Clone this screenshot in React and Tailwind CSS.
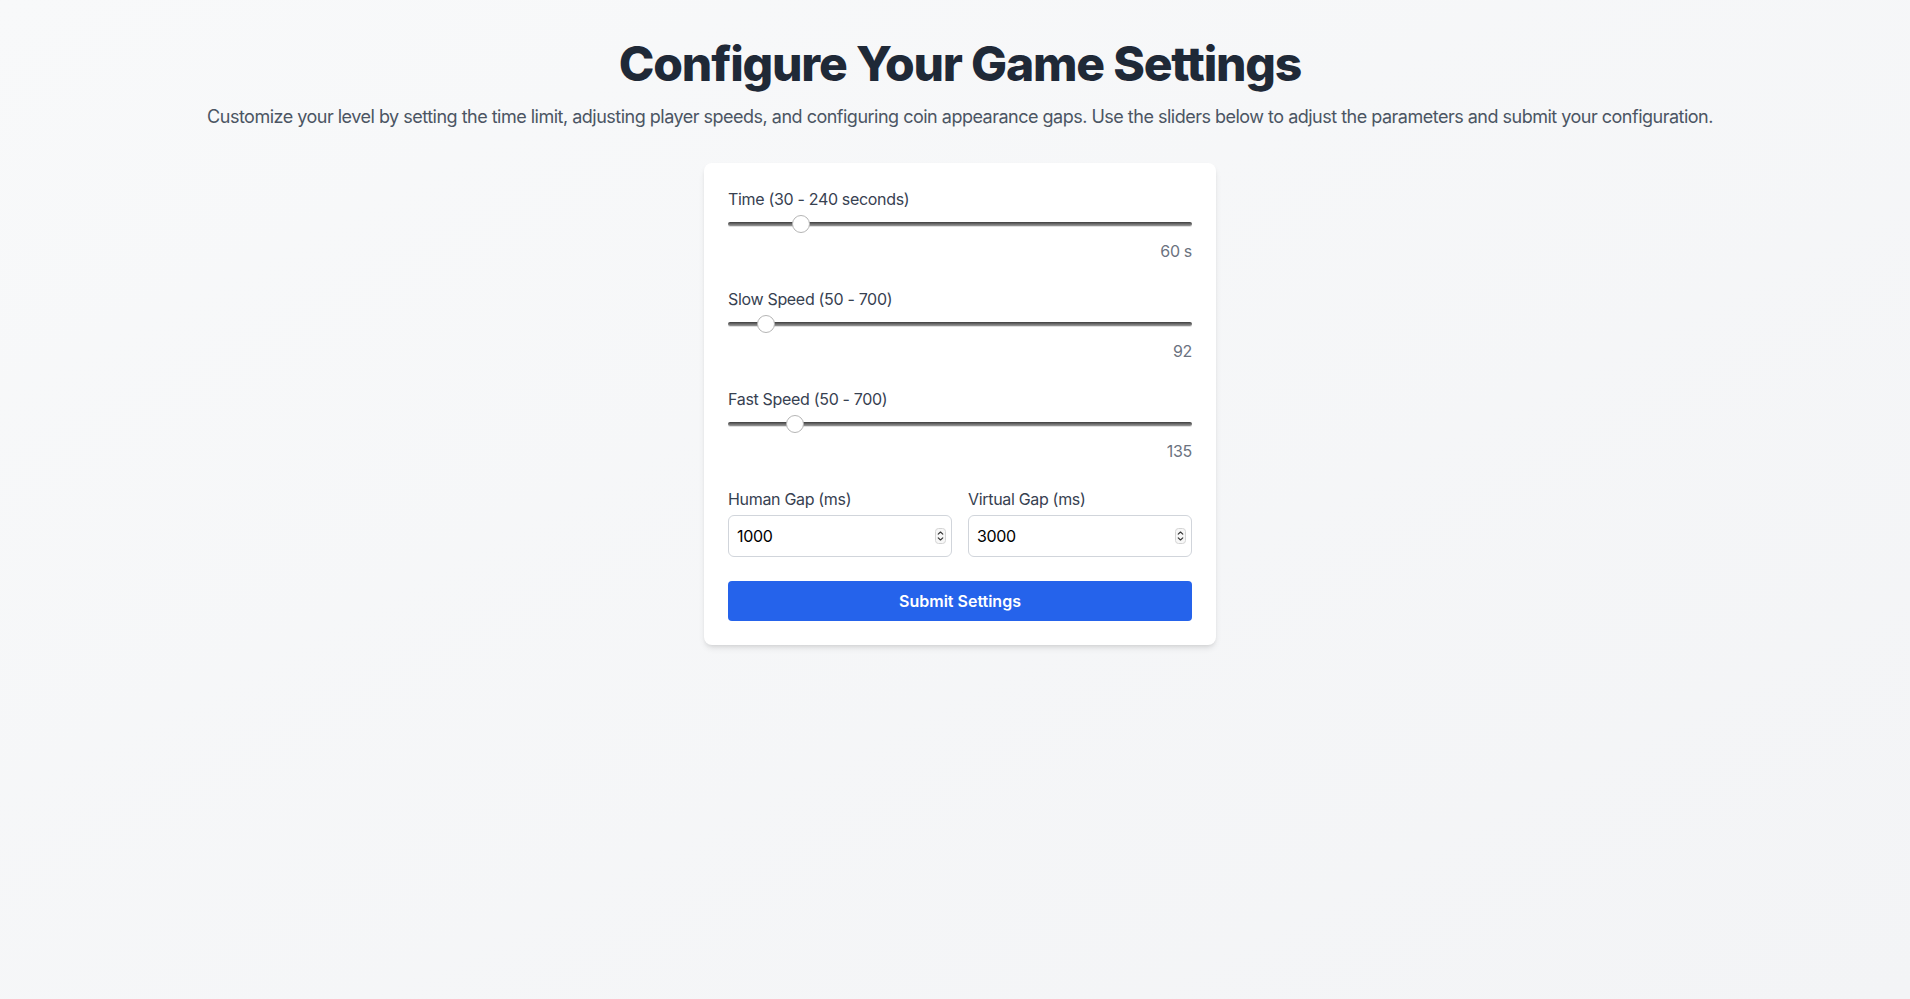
import React, { useState } from "react";

function Slider({ label, min, max, value, suffix }) {
  const pct = (value - min) / (max - min);
  return (
    <div>
      <div className="text-base leading-6 tracking-[-0.02em] text-[#374151]">{label}</div>
      <div className="relative mt-1 h-4">
        <div className="absolute left-0 right-0 top-[7px] h-[4px] rounded-full bg-linear-to-b from-[#3f3f3f] to-[#9b9b9b] shadow-[0_1px_0_rgba(0,0,0,0.12)]" />
        <div
          className="absolute top-0 h-[18px] w-[18px] rounded-full border border-[#b5b5b5] bg-white"
          style={{ left: `calc((100% - 18px) * ${pct})` }}
        />
      </div>
      <div className="mt-2 text-right text-base leading-6 tracking-[-0.02em] text-[#6b7280]">
        {value}
        {suffix}
      </div>
    </div>
  );
}

function Spinner() {
  return (
    <svg width="11" height="16" viewBox="0 0 11 16" className="shrink-0">
      <rect x="0.5" y="0.5" width="10" height="15" rx="3" fill="#f7f7f7" stroke="#d4d4d4" />
      <path d="M3.2 6.2 L5.5 4 L7.8 6.2" fill="none" stroke="#333" strokeWidth="1.1" strokeLinecap="round" strokeLinejoin="round" />
      <path d="M3.2 9.8 L5.5 12 L7.8 9.8" fill="none" stroke="#333" strokeWidth="1.1" strokeLinecap="round" strokeLinejoin="round" />
    </svg>
  );
}

function NumberField({ label, value }) {
  const [v, setV] = useState(value);
  return (
    <div>
      <div className="mb-1 text-base leading-6 tracking-[-0.02em] text-[#374151]">{label}</div>
      <div className="flex h-[42px] items-center rounded-md border border-[#d1d5db] bg-white pl-2 pr-[5px]">
        <input
          type="text"
          value={v}
          onChange={(e) => setV(e.target.value)}
          className="min-w-0 flex-1 bg-transparent text-base leading-6 tracking-[-0.02em] text-black outline-none"
        />
        <Spinner />
      </div>
    </div>
  );
}

export default function App() {
  return (
    <div
      className="min-h-[999px] bg-linear-to-br from-[#f8f9fa] to-[#f3f4f6] pl-[50px] pr-10 pt-10 pb-10"
      style={{ fontFamily: "Inter, 'Noto Sans', sans-serif" }}
    >
      <h1 className="text-center text-5xl leading-none font-extrabold tracking-tight text-[#1f2937]">
        Configure Your Game Settings
      </h1>
      <p className="mt-[15px] text-center text-lg leading-7 tracking-[-0.028em] text-[#4b5563]">
        Customize your level by setting the time limit, adjusting player speeds, and configuring coin appearance gaps. Use the sliders below to adjust the parameters and submit your configuration.
      </p>
      <div className="mx-auto mt-8 w-full max-w-lg rounded-lg bg-white p-6 shadow-md">
        <div className="flex flex-col gap-6">
          <Slider label="Time (30 - 240 seconds)" min={30} max={240} value={60} suffix=" s" />
          <Slider label="Slow Speed (50 - 700)" min={50} max={700} value={92} suffix="" />
          <Slider label="Fast Speed (50 - 700)" min={50} max={700} value={135} suffix="" />
          <div className="grid grid-cols-2 gap-4">
            <NumberField label="Human Gap (ms)" value="1000" />
            <NumberField label="Virtual Gap (ms)" value="3000" />
          </div>
          <button className="h-10 w-full rounded bg-[#2563eb] text-base font-semibold text-white">
            Submit Settings
          </button>
        </div>
      </div>
    </div>
  );
}
